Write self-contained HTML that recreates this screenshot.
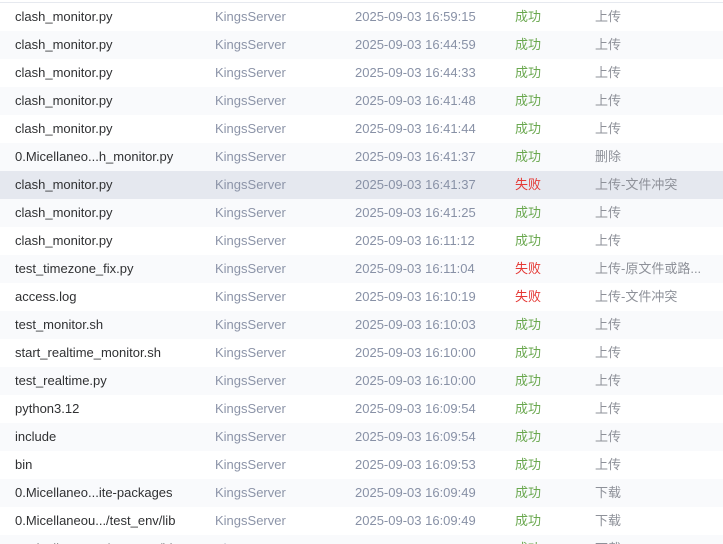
<!DOCTYPE html>
<html><head><meta charset="utf-8"><style>
html,body{margin:0;padding:0;width:723px;height:544px;overflow:hidden;background:#fff;font-family:"Liberation Sans","Noto Sans CJK SC",sans-serif;font-size:13px}
.top{height:2px;border-bottom:1px solid #e6e9ef}
.r{height:28px;position:relative;line-height:28px}
.r:nth-child(even){background:#f9fafc}
.r.h{background:#e5e8ef}
.r span{position:absolute;top:0;white-space:nowrap}
.a{left:15px;color:#303133}
.b{left:215px;color:#8c94a8}
.c{left:355px;color:#8891a6}
.d{left:515px}
.ok{color:#6aa84f}.no{color:#e53935}
.e{left:595px;color:#8e9199}
</style></head><body>
<div class="top"></div>
<div id="t">
<div class="r"><span class="a">clash_monitor.py</span><span class="b">KingsServer</span><span class="c">2025-09-03 16:59:15</span><span class="d ok">成功</span><span class="e">上传</span></div>
<div class="r"><span class="a">clash_monitor.py</span><span class="b">KingsServer</span><span class="c">2025-09-03 16:44:59</span><span class="d ok">成功</span><span class="e">上传</span></div>
<div class="r"><span class="a">clash_monitor.py</span><span class="b">KingsServer</span><span class="c">2025-09-03 16:44:33</span><span class="d ok">成功</span><span class="e">上传</span></div>
<div class="r"><span class="a">clash_monitor.py</span><span class="b">KingsServer</span><span class="c">2025-09-03 16:41:48</span><span class="d ok">成功</span><span class="e">上传</span></div>
<div class="r"><span class="a">clash_monitor.py</span><span class="b">KingsServer</span><span class="c">2025-09-03 16:41:44</span><span class="d ok">成功</span><span class="e">上传</span></div>
<div class="r"><span class="a">0.Micellaneo...h_monitor.py</span><span class="b">KingsServer</span><span class="c">2025-09-03 16:41:37</span><span class="d ok">成功</span><span class="e">删除</span></div>
<div class="r h"><span class="a">clash_monitor.py</span><span class="b">KingsServer</span><span class="c">2025-09-03 16:41:37</span><span class="d no">失败</span><span class="e">上传-文件冲突</span></div>
<div class="r"><span class="a">clash_monitor.py</span><span class="b">KingsServer</span><span class="c">2025-09-03 16:41:25</span><span class="d ok">成功</span><span class="e">上传</span></div>
<div class="r"><span class="a">clash_monitor.py</span><span class="b">KingsServer</span><span class="c">2025-09-03 16:11:12</span><span class="d ok">成功</span><span class="e">上传</span></div>
<div class="r"><span class="a">test_timezone_fix.py</span><span class="b">KingsServer</span><span class="c">2025-09-03 16:11:04</span><span class="d no">失败</span><span class="e">上传-原文件或路...</span></div>
<div class="r"><span class="a">access.log</span><span class="b">KingsServer</span><span class="c">2025-09-03 16:10:19</span><span class="d no">失败</span><span class="e">上传-文件冲突</span></div>
<div class="r"><span class="a">test_monitor.sh</span><span class="b">KingsServer</span><span class="c">2025-09-03 16:10:03</span><span class="d ok">成功</span><span class="e">上传</span></div>
<div class="r"><span class="a">start_realtime_monitor.sh</span><span class="b">KingsServer</span><span class="c">2025-09-03 16:10:00</span><span class="d ok">成功</span><span class="e">上传</span></div>
<div class="r"><span class="a">test_realtime.py</span><span class="b">KingsServer</span><span class="c">2025-09-03 16:10:00</span><span class="d ok">成功</span><span class="e">上传</span></div>
<div class="r"><span class="a">python3.12</span><span class="b">KingsServer</span><span class="c">2025-09-03 16:09:54</span><span class="d ok">成功</span><span class="e">上传</span></div>
<div class="r"><span class="a">include</span><span class="b">KingsServer</span><span class="c">2025-09-03 16:09:54</span><span class="d ok">成功</span><span class="e">上传</span></div>
<div class="r"><span class="a">bin</span><span class="b">KingsServer</span><span class="c">2025-09-03 16:09:53</span><span class="d ok">成功</span><span class="e">上传</span></div>
<div class="r"><span class="a">0.Micellaneo...ite-packages</span><span class="b">KingsServer</span><span class="c">2025-09-03 16:09:49</span><span class="d ok">成功</span><span class="e">下载</span></div>
<div class="r"><span class="a">0.Micellaneou.../test_env/lib</span><span class="b">KingsServer</span><span class="c">2025-09-03 16:09:49</span><span class="d ok">成功</span><span class="e">下载</span></div>
<div class="r"><span class="a">0.Micellaneou.../test_env/bin</span><span class="b">KingsServer</span><span class="c">2025-09-03 16:09:49</span><span class="d ok">成功</span><span class="e">下载</span></div>
</div>
</body></html>
